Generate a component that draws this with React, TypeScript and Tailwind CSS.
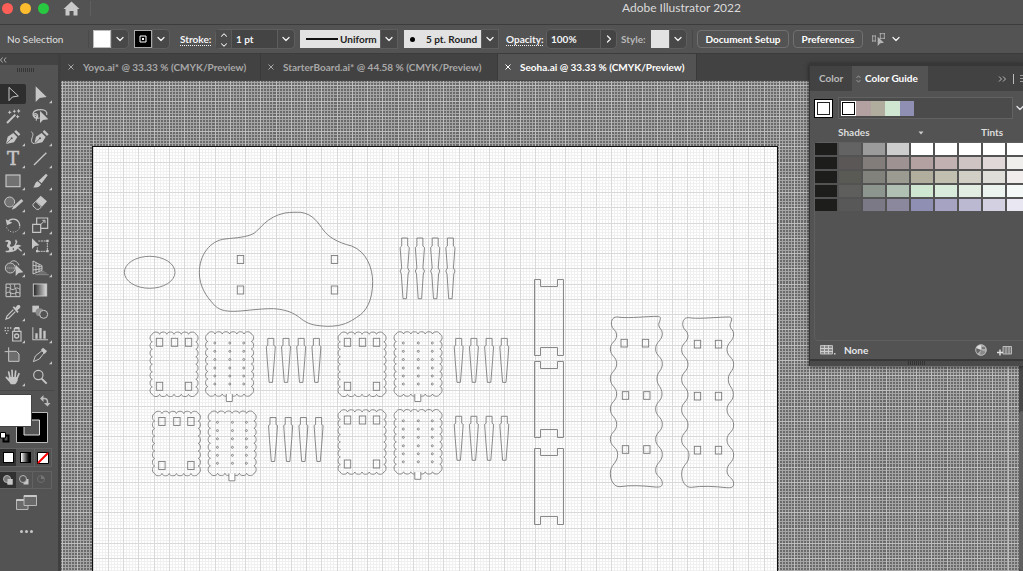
import type { ReactNode } from 'react';
import { ChevronDown, ChevronRight, ChevronUp } from 'lucide-react';

const tabs = [
  { name: 'Yoyo.ai* @ 33.33 % (CMYK/Preview)', width: 'w-[200px]', active: false },
  { name: 'StarterBoard.ai* @ 44.58 % (CMYK/Preview)', width: 'w-[237px]', active: false },
  { name: 'Seoha.ai @ 33.33 % (CMYK/Preview)', width: 'w-[199px]', active: true },
];

const swatchRows = [
  ['bg-[#1d1e1c]', 'bg-[#636363]', 'bg-[#9b9b9b]', 'bg-[#cdcdcd]', 'bg-white', 'bg-white', 'bg-white', 'bg-white', 'bg-white'],
  ['bg-[#1d1e1c]', 'bg-[#5b5757]', 'bg-[#827c7b]', 'bg-[#9e9392]', 'bg-[#b3a0a0]', 'bg-[#c1b2b1]', 'bg-[#cfc4c4]', 'bg-[#dfd7d8]', 'bg-[#f0eded]'],
  ['bg-[#1d1e1c]', 'bg-[#5a5a54]', 'bg-[#81827b]', 'bg-[#9c9b91]', 'bg-[#b1ae9e]', 'bg-[#c1bfb0]', 'bg-[#d1cec5]', 'bg-[#dfded9]', 'bg-[#f1edec]'],
  ['bg-[#1d1e1c]', 'bg-[#5e5f5c]', 'bg-[#8d958f]', 'bg-[#b0c0b3]', 'bg-[#cfe7d1]', 'bg-[#d9ebda]', 'bg-[#e3eee3]', 'bg-[#ebf4ee]', 'bg-[#f5f9f7]'],
  ['bg-[#1d1e1c]', 'bg-[#585858]', 'bg-[#7b7985]', 'bg-[#8b889d]', 'bg-[#8f8eb3]', 'bg-[#a5a2c2]', 'bg-[#bbb9d1]', 'bg-[#d2d0e1]', 'bg-[#e8e7f2]'],
];

const nib = (
  <>
    <path d="M9 51L14 29L31 18L43 30L33 46Z" fill="currentColor" />
    <path d="M34 14L39 9L52 22L47 27Z" fill="currentColor" />
    <path d="M10 50L25 35" stroke="#535353" strokeWidth="2" />
    <circle cx="26" cy="34" r="3" fill="#535353" />
  </>
);

const tools: { name: string; more: boolean; icon: ReactNode }[] = [
  { name: 'Selection', more: false, icon: <path d="M18 10V50L28 39L46 36Z" fill="none" stroke="currentColor" strokeWidth="3" /> },
  { name: 'Direct Selection', more: true, icon: <path d="M17 7V54L29 42L50 39Z" fill="currentColor" /> },
  {
    name: 'Magic Wand', more: false, icon: (
      <>
        <path d="M12 51L37 26" stroke="currentColor" strokeWidth="6" />
        <path d="M20 13l2 4 4 2-4 2-2 4-2-4-4-2 4-2zM34 10l2 4 3 2-3 2-2 3-2-3-3-2 3-2zM47 8l2 5 4 2-4 2-2 5-2-5-4-2 4-2zM44 26l2 4 4 2-4 2-2 4-2-4-4-2 4-2z" fill="currentColor" />
      </>
    ),
  },
  {
    name: 'Lasso', more: false, icon: (
      <>
        <path d="M29 36C14 38 8 32 9 23C11 13 23 11 33 11C46 11 53 17 50 27M10 27C15 18 25 25 23 32C20 40 11 36 13 31C16 23 26 34 18 44" fill="none" stroke="currentColor" strokeWidth="3.5" />
        <path d="M30 15V51L39 42L55 40Z" fill="currentColor" />
      </>
    ),
  },
  { name: 'Pen', more: true, icon: nib },
  {
    name: 'Curvature', more: true, icon: (
      <>
        <g transform="translate(4 0)">{nib}</g>
        <path d="M4 14C12 20 8 27 6 33C3 42 5 50 13 50" fill="none" stroke="currentColor" strokeWidth="3" />
      </>
    ),
  },
  { name: 'Type', more: true, icon: <text x="30" y="48" textAnchor="middle" fontFamily="DejaVu Serif, serif" fontSize="54" fill="currentColor" stroke="currentColor" strokeWidth="1.5">T</text> },
  { name: 'Line Segment', more: true, icon: <path d="M12 48L49 11" stroke="currentColor" strokeWidth="4" /> },
  { name: 'Rectangle', more: true, icon: <rect x="9" y="12" width="42" height="35" fill="#727272" stroke="currentColor" strokeWidth="3.5" /> },
  {
    name: 'Paintbrush', more: true, icon: (
      <>
        <path d="M48 8L53 13L35 37L26 29Z" fill="currentColor" />
        <path d="M23 31L33 40C28 50 20 51 9 49C16 45 13 34 23 31Z" fill="currentColor" />
      </>
    ),
  },
  {
    name: 'Shaper', more: true, icon: (
      <>
        <circle cx="20" cy="27" r="15" fill="#727272" stroke="currentColor" strokeWidth="3" />
        <path d="M57 20L35 42" stroke="#535353" strokeWidth="14" />
        <path d="M55 18L61 24L37 46L26 50L31 40Z" fill="currentColor" />
      </>
    ),
  },
  {
    name: 'Eraser', more: true, icon: (
      <>
        <path d="M32 8L51 25L36 41L17 24Z" fill="currentColor" />
        <path d="M17 25L34 42L27 49H20L9 39V34Z" fill="none" stroke="currentColor" strokeWidth="3" />
      </>
    ),
  },
  {
    name: 'Rotate', more: true, icon: (
      <>
        <path d="M13 23C20 10 39 9 47 21C50 26 51 30 50 34" fill="none" stroke="currentColor" strokeWidth="4" />
        <path d="M50 37C46 51 28 56 17 46C12 42 10 37 10 32" fill="none" stroke="currentColor" strokeWidth="3" strokeDasharray="3 5" />
        <path d="M8 13L12 31L28 23Z" fill="currentColor" />
      </>
    ),
  },
  {
    name: 'Scale', more: true, icon: (
      <>
        <path d="M20 26V9H53V40H32M8 28H32V52H8Z" fill="none" stroke="currentColor" strokeWidth="3.5" />
        <path d="M32 29L44 17M37 16H45V24" fill="none" stroke="currentColor" strokeWidth="3" />
      </>
    ),
  },
  {
    name: 'Width', more: true, icon: (
      <>
        <path d="M6 15C15 8 26 14 24 22C22 28 17 29 24 32C31 33 40 20 56 30C46 30 43 46 28 47C16 48 6 52 8 44C20 46 22 38 13 33C8 27 19 21 14 18C11 16 8 19 6 15Z" fill="currentColor" />
        <path d="M28 46L42 16M46 37L56 46M39 11v8" stroke="currentColor" strokeWidth="4" />
        <circle cx="31" cy="39" r="4" fill="#535353" stroke="currentColor" strokeWidth="3" />
      </>
    ),
  },
  {
    name: 'Free Transform', more: true, icon: (
      <>
        <path d="M6 7V39L15 30L28 28Z" fill="currentColor" />
        <path d="M25 15H52V46H22V34" fill="none" stroke="currentColor" strokeWidth="3" strokeDasharray="6 2" />
        <path d="M49 11h7v7h-7zM49 42h7v7h-7zM18 42h7v7h-7z" fill="currentColor" />
      </>
    ),
  },
  {
    name: 'Shape Builder', more: true, icon: (
      <>
        <circle cx="22" cy="30" r="15" fill="#666" stroke="currentColor" strokeWidth="3" />
        <path d="M22 13C30 4 44 9 48 22" fill="none" stroke="currentColor" strokeWidth="3" />
        <path d="M13 30H38" stroke="currentColor" strokeWidth="3" strokeDasharray="3 3" />
        <path d="M38 20V54L47 45L61 43Z" fill="currentColor" />
      </>
    ),
  },
  {
    name: 'Perspective Grid', more: true, icon: (
      <>
        <path d="M9 9V48M9 9L36 23V37L9 48M18 14V44M27 19V41M9 22L36 27M9 36L36 32" fill="none" stroke="currentColor" strokeWidth="3" />
        <path d="M31 40H43M25 45H50M16 50H56" stroke="#8a8a8a" strokeWidth="3" />
      </>
    ),
  },
  {
    name: 'Mesh', more: false, icon: (
      <path d="M9 12H51V50H9ZM9 24C22 17 23 34 34 27C43 21 45 25 51 28M9 40C20 30 27 47 38 39C44 35 48 38 51 41M20 12C28 23 17 31 22 38C25 44 23 47 21 50M36 12C31 23 43 28 39 36C37 42 38 46 41 50" fill="none" stroke="currentColor" strokeWidth="3" />
    ),
  },
  { name: 'Gradient', more: false, icon: <rect x="10" y="12" width="40" height="36" fill="url(#ramp)" stroke="currentColor" strokeWidth="3" /> },
  {
    name: 'Eyedropper', more: true, icon: (
      <>
        <path d="M31 23L12 42L9 51L18 48L37 29" fill="none" stroke="currentColor" strokeWidth="3.5" />
        <path d="M29 16L33 13L37 17L43 10C51 6 55 14 50 19L43 25L47 29L43 33Z" fill="currentColor" />
      </>
    ),
  },
  {
    name: 'Blend', more: false, icon: (
      <>
        <rect x="7" y="11" width="20" height="20" fill="currentColor" />
        <circle cx="29" cy="31" r="12" fill="#8c8c8c" />
        <circle cx="41" cy="37" r="12" fill="#535353" stroke="currentColor" strokeWidth="3" />
      </>
    ),
  },
  {
    name: 'Symbol Sprayer', more: true, icon: (
      <>
        <path d="M5 10h4v4h-4zM13 10h4v4h-4zM21 10h4v4h-4zM5 18h4v4h-4zM13 18h4v4h-4zM9 26h4v4h-4z" fill="currentColor" />
        <path d="M29 22H54V51H29ZM34 22V14H48V22" fill="none" stroke="currentColor" strokeWidth="3.5" />
        <path d="M35 9H49V15H35Z" fill="currentColor" />
        <circle cx="41" cy="36" r="6" fill="none" stroke="currentColor" strokeWidth="4" />
      </>
    ),
  },
  { name: 'Column Graph', more: true, icon: <path d="M7 10H10V46H54V49H7ZM16 28h7v16h-7zM28 12h7v32h-7zM40 20h7v24h-7z" fill="currentColor" /> },
  {
    name: 'Artboard', more: false, icon: (
      <>
        <path d="M17 7V20H5" fill="none" stroke="currentColor" strokeWidth="3" />
        <path d="M17 19H40L48 27V49H17Z" fill="#6d6d6d" stroke="currentColor" strokeWidth="3" />
      </>
    ),
  },
  {
    name: 'Slice', more: true, icon: (
      <>
        <path d="M10 50L16 33L36 17L42 24L28 42Z" fill="none" stroke="currentColor" strokeWidth="3" />
        <path d="M33 14L39 8L51 18L44 27Z" fill="currentColor" />
      </>
    ),
  },
  {
    name: 'Hand', more: true, icon: (
      <>
        <path d="M17 30H44V40C42 46 38 51 36 52H24C21 50 18 43 17 40Z" fill="currentColor" />
        <path d="M21 33L17 15M28 31L27 10M36 31L38 12M42 34L48 20M19 41L10 31" stroke="currentColor" strokeWidth="5" strokeLinecap="round" />
      </>
    ),
  },
  {
    name: 'Zoom', more: false, icon: (
      <>
        <circle cx="25" cy="24" r="14" fill="none" stroke="currentColor" strokeWidth="3.5" />
        <path d="M35 35L50 50" stroke="currentColor" strokeWidth="6" />
      </>
    ),
  },
];

// ruler grid: heavy line every 15.25px, five light steps in each
function gridPath(start: number, every: number, count: number, vertical: boolean) {
  let d = '';
  for (let i = 0; i < count; i++) {
    const p = Math.round(start + i * every) + 0.5;
    d += vertical ? `M${p} 0V2400` : `M0 ${p}H2800`;
  }
  return d;
}

const minor = gridPath(1, 3.05, 900, true) + gridPath(9, 3.05, 780, false);
const major = gridPath(1, 15.25, 180, true) + gridPath(9, 15.25, 156, false);

// card outline with rounded bumps on all four edges
function scallop(w: number, h: number) {
  const nx = 6;
  const ny = 8;
  const dx = (w - 4) / nx;
  const dy = (h - 4) / ny;
  let d = 'M2 2';
  for (let i = 0; i < nx; i++) d += `c${dx * 0.1} -3 ${dx * 0.9} -3 ${dx} 0`;
  for (let i = 0; i < ny; i++) d += `c3 ${dy * 0.1} 3 ${dy * 0.9} 0 ${dy}`;
  for (let i = 0; i < nx; i++) d += `c${-dx * 0.1} 3 ${-dx * 0.9} 3 ${-dx} 0`;
  for (let i = 0; i < ny; i++) d += `c-3 ${-dy * 0.1} -3 ${-dy * 0.9} 0 ${-dy}`;
  return d;
}

function wave(points: number[][]) {
  let d = '';
  for (let i = 1; i < points.length; i++) {
    const [x0, y0] = points[i - 1];
    const [x1, y1] = points[i];
    const m = (y0 + y1) / 2;
    d += `C${x0} ${m} ${x1} ${m} ${x1} ${y1}`;
  }
  return d;
}

const sideRight = wave([[416, 163], [427, 190], [407, 237], [427, 281], [411, 326], [426, 372], [407, 417], [427, 463], [407, 508], [427, 553], [407, 601], [427, 640]]);
const sideLeft = wave([[271, 610], [293, 553], [271, 508], [290, 463], [271, 417], [290, 372], [271, 326], [290, 281], [271, 237], [290, 195], [274, 162]]);
const wavyPanel = `M274 162C274 142 286 139 300 142C330 145 380 139 415 139C427 141 418 153 416 163${sideRight}C427 650 420 652 405 651C370 647 330 645 300 650C282 651 271 632 271 610${sideLeft}`;

const Hole = ({ x, y }: { x: number; y: number }) => <rect x={x} y={y} width="6.4" height="8" />;

function Seat({ x, y }: { x: number; y: number }) {
  return (
    <g transform={`translate(${x} ${y})`}>
      <path d={scallop(47.5, 64)} />
      <Hole x={6} y={6} />
      <Hole x={21} y={6} />
      <Hole x={35} y={6} />
      <Hole x={6} y={50} />
      <Hole x={35} y={50} />
    </g>
  );
}

function Back({ x, y }: { x: number; y: number }) {
  return (
    <g transform={`translate(${x} ${y})`}>
      <path d={scallop(47.5, 64)} />
      <path d="M20.500 62V69.5H26.500V62" fill="#fff" />
      {[9, 24, 38].map((cx) => [11, 19.3, 27.5, 36, 44, 52].map((cy) => <circle key={`${cx}-${cy}`} cx={cx} cy={cy} r="1" />))}
    </g>
  );
}

function Legs({ x, y }: { x: number; y: number }) {
  return (
    <g transform={`translate(${x} ${y})`}>
      {[0, 15.2, 30.4, 45.6].map((dx) => (
        <path key={dx} transform={`translate(${dx} 0)`} d="M-3 0H3V7L4.5 8L3.5 22L1.7 44H-1.7L-3.5 22L-4.5 8L-3 7Z" />
      ))}
    </g>
  );
}

function Artwork() {
  return (
    <svg className="absolute inset-0 h-full w-full" aria-label="Artboard">
      <g transform="translate(-61 -81)">
        <path d={minor} stroke="#a5a5a5" />
        <path d={major} stroke="#bebebe" />
        <clipPath id="board"><rect x="93" y="147" width="685" height="2000" /></clipPath>
        <rect x="92.5" y="146.5" width="685" height="2000" fill="#fff" />
        <g clipPath="url(#board)">
          <path d={minor} stroke="#f0f0f0" />
          <path d={major} stroke="#d9d9d9" />
        </g>
        <rect x="92.5" y="146.5" width="685" height="2000" fill="none" stroke="#111" />
        <g fill="none" stroke="#7d7d7d" strokeWidth="0.9">
          <ellipse cx="149.7" cy="272.3" rx="25.3" ry="16" />
          <path transform="translate(110 200) scale(.33333)" strokeWidth="2.8" d="M268 218C268 165 300 122 345 117C380 113 410 112 432 100C450 88 470 50 525 39C545 36 560 37 572 37C610 42 625 70 640 90C655 110 680 127 725 138C770 155 788 205 788 245C788 300 770 335 740 352C720 365 700 379 652 379C620 377 600 375 580 361C560 347 545 330 490 326C440 326 400 334 370 334C345 334 325 330 310 312C290 290 268 260 268 218Z" />
          <Hole x={237.3} y={255.5} />
          <Hole x={237.3} y={286} />
          <Hole x={331.3} y={255.5} />
          <Hole x={331.3} y={286} />
          {[404.7, 419.9, 435.2, 450.4].map((x) => (
            <path key={x} transform={`translate(${x} 238)`} d="M-3 0H3V8L4.6 9.5L3 30L4.6 33L3.4 36L1.7 60.7H-1.7L-3.4 36L-4.6 33L-3 30L-4.6 9.5L-3 8Z" />
          ))}
          <Seat x={150.3} y={332.3} />
          <Back x={205.8} y={332} />
          <Legs x={270.8} y={338.4} />
          <Seat x={152.7} y={411.5} />
          <Back x={208.4} y={411.3} />
          <Legs x={273} y={417.5} />
          <Seat x={338.3} y={332.3} />
          <Back x={394.3} y={332} />
          <Legs x={458.7} y={338.4} />
          <Seat x={338.3} y={410} />
          <Back x={394.3} y={409.8} />
          <Legs x={458.7} y={416.3} />
          {[279.5, 361.5, 448.5].map((y) => (
            <path key={y} transform={`translate(534.5 ${y})`} d="M0 0H6V7H23V0H29V76H23V68H6V76H0Z" />
          ))}
          <g transform="translate(520 270) scale(.33333)" strokeWidth="2.8">
            <path d={wavyPanel} />
            <path transform="translate(214 2)" d={wavyPanel} />
            {[[303, 208], [367, 208], [307, 365], [371, 365], [307, 527], [371, 527], [523, 211], [586, 211], [523, 367], [586, 367], [523, 529], [586, 529]].map(([x, y]) => (
              <rect key={`${x}-${y}`} x={x} y={y} width="19" height="23" />
            ))}
          </g>
        </g>
      </g>
    </svg>
  );
}

function DropButton({ label }: { label: string }) {
  return (
    <button aria-label={label} className="flex h-[18px] w-4 items-center justify-center rounded-r-sm bg-[#484848] ring-1 ring-[#5e5e5e]">
      <ChevronDown className="size-3" strokeWidth={2.5} />
    </button>
  );
}

function ControlBar() {
  return (
    <div className="flex h-[29px] shrink-0 items-center border-t border-[#3c3c3c] text-[10px] font-bold text-gray-100">
      <span className="w-[88px] shrink-0 pl-[7px] font-medium text-[#d8d8d8]">No Selection</span>
      <div className="flex w-[92px] shrink-0 items-center border-l border-[#4a4a4a] pl-1">
        <button aria-label="Fill" className="mr-px size-[18px] border border-[#bbb] bg-white" />
        <DropButton label="Fill options" />
        <button aria-label="Stroke color" className="ml-1.5 mr-px flex size-[18px] items-center justify-center border border-[#aaa] bg-black">
          <svg viewBox="0 0 8 8" className="size-2" aria-hidden="true">
            <path d="M1 1H7V7H1Z" fill="none" stroke="#fff" />
            <path d="M3 3H5V5H3Z" fill="#fff" />
          </svg>
        </button>
        <DropButton label="Stroke options" />
      </div>
      <label htmlFor="stroke" className="w-9 shrink-0 underline decoration-dotted underline-offset-2">Stroke:</label>
      <div className="flex h-[18px] w-[78px] shrink-0 items-center rounded-sm bg-[#444] ring-1 ring-[#5e5e5e]">
        <div className="flex h-full w-4 flex-col items-center justify-between border-r border-[#5a5a5a] bg-[#4b4b4b]">
          <button aria-label="Increase stroke"><ChevronUp className="size-2.5" strokeWidth={2.5} /></button>
          <button aria-label="Decrease stroke"><ChevronDown className="size-2.5" strokeWidth={2.5} /></button>
        </div>
        <input id="stroke" defaultValue="1 pt" className="w-[46px] bg-transparent pl-1 outline-none" />
        <DropButton label="Stroke weights" />
      </div>
      <div className="relative ml-1.5 h-[18px] w-[97px] shrink-0">
        <select aria-label="Width profile" className="h-full w-full appearance-none bg-[#e2e2e2] pl-10 text-[#222]">
          <option>Uniform</option>
        </select>
        <svg viewBox="0 0 32 2" className="pointer-events-none absolute left-1.5 top-2 h-0.5 w-8" aria-hidden="true"><path d="M0 1H32" stroke="#111" strokeWidth="2" /></svg>
        <span className="pointer-events-none absolute right-0 top-0 flex h-full w-4 items-center justify-center bg-[#484848] ring-1 ring-[#5e5e5e]"><ChevronDown className="size-3" strokeWidth={2.5} /></span>
      </div>
      <div className="relative ml-[7px] h-[18px] w-[94px] shrink-0">
        <select aria-label="Brush" className="h-full w-full appearance-none bg-[#e2e2e2] pl-[22px] text-[#222]">
          <option>5 pt. Round</option>
        </select>
        <span className="pointer-events-none absolute left-1.5 top-[7px] size-[5px] rounded-full bg-black" />
        <span className="pointer-events-none absolute right-0 top-0 flex h-full w-4 items-center justify-center bg-[#484848] ring-1 ring-[#5e5e5e]"><ChevronDown className="size-3" strokeWidth={2.5} /></span>
      </div>
      <label htmlFor="opacity" className="ml-2 w-[41px] shrink-0 underline decoration-dotted underline-offset-2">Opacity:</label>
      <div className="flex h-[18px] w-[69px] shrink-0 items-center rounded-sm bg-[#444] ring-1 ring-[#5e5e5e]">
        <input id="opacity" defaultValue="100%" className="w-[53px] bg-transparent pl-1 outline-none" />
        <button aria-label="Opacity slider" className="flex h-full w-4 items-center justify-center border-l border-[#5a5a5a]"><ChevronRight className="size-3" strokeWidth={2.5} /></button>
      </div>
      <span className="ml-[5px] w-[30px] shrink-0 text-[#b8b8b8]">Style:</span>
      <button aria-label="Graphic style" className="mr-px size-[18px] shrink-0 bg-[#e2e2e2]" />
      <DropButton label="Graphic styles" />
      <span className="ml-1.5 h-[18px] border-l border-[#484848]" />
      <button className="ml-1 h-[18px] w-[92px] shrink-0 rounded-sm border border-[#707070] text-white">Document Setup</button>
      <button className="ml-1 h-[18px] w-[70px] shrink-0 rounded-sm border border-[#707070] text-white">Preferences</button>
      <button aria-label="Align to" className="ml-2 flex shrink-0 items-center gap-1">
        <svg viewBox="0 0 45 48" className="h-4 w-[15px] text-[#b5b5b5]" aria-hidden="true">
          <path d="M3 15H15M3 30H15M5 13V32M13 13V32M26 8H42M26 22H42M28 6V24M40 6V24" stroke="currentColor" strokeWidth="2.5" />
          <path d="M20 17V45L28 37L39 35Z" fill="currentColor" />
        </svg>
        <ChevronDown className="size-3" strokeWidth={2.5} />
      </button>
    </div>
  );
}

function Toolbar() {
  return (
    <aside className="flex w-[61px] shrink-0 flex-col border-r-3 border-[#3f3f3f] text-[#c6c6c6]">
      <button aria-label="Collapse tools" className="h-[11px] shrink-0 bg-[#434343]">
        <svg viewBox="0 0 7 6" className="h-1.5 w-[7px]" aria-hidden="true"><path d="M2.500 .5L.5 3L2.500 5.500M6 .5L4 3L6 5.500" fill="none" stroke="currentColor" strokeWidth=".8" /></svg>
      </button>
      <div className="flex h-[18px] shrink-0 justify-center pr-1.5 pt-[3px]">
        <svg viewBox="0 0 18 4" className="h-1 w-[18px]" aria-hidden="true"><path d="M0 2H18" stroke="#363636" strokeWidth="4" strokeDasharray="1 1" /></svg>
      </div>
      <div className="grid h-[305px] shrink-0 grid-cols-[26px_28px] grid-rows-[repeat(14,1fr)] items-center">
        {tools.map((tool, i) => (
          <button key={tool.name} aria-label={tool.name} className={i === 0 ? 'flex h-5 items-center justify-center rounded-r-xs bg-[#2e2e2e]' : 'flex h-5 items-center justify-center'}>
            <svg viewBox="0 0 78 60" className="h-5 w-[26px] shrink-0" aria-hidden="true">
              <defs>
                <linearGradient id="ramp"><stop stopColor="#222" /><stop offset="1" stopColor="#ddd" /></linearGradient>
              </defs>
              <g transform="translate(9 0)">
                {tool.icon}
                {tool.more && <path d="M66 49V58H57Z" fill="currentColor" />}
              </g>
            </svg>
          </button>
        ))}
      </div>
      <button aria-label="Fill and stroke" className="mt-0.5 h-[54px] w-[54px] shrink-0 border-t border-[#484848]">
        <svg viewBox="0 0 54 52" className="h-[52px] w-[54px]" aria-hidden="true">
          <path d="M16.500 20.500H47.500V50.500H16.500Z" fill="#000" stroke="#bbb" />
          <path d="M24 28H39.500V43H24Z" fill="#535353" stroke="#ddd" />
          <path d="M-1 2.500H31.500V34.500H-1Z" fill="#fff" stroke="#444" />
          <path d="M41 6.500H44.500Q47.500 6.500 47.500 10V12" fill="none" stroke="#bbb" strokeWidth="1.500" />
          <path d="M40 6.500L43.500 3V10ZM47.500 14.500L44 11H50.500Z" fill="#bbb" />
          <path d="M3.500 43.500H8.500V49.500H3.500Z" fill="none" stroke="#000" strokeWidth="2" />
          <path d="M.5 40.500H5.500V46H.5Z" fill="#fff" stroke="#000" />
        </svg>
      </button>
      <div className="mt-1 flex h-[19px] w-[52px] shrink-0 border-y border-r border-[#626262]">
        <button aria-label="Color" className="flex w-4 items-center justify-center bg-[#303030]"><span className="size-[11px] border border-black bg-white" /></button>
        <button aria-label="Gradient fill" className="flex w-[19px] items-center justify-center border-r border-[#626262]"><span className="size-[11px] border border-black bg-linear-to-r from-white to-black" /></button>
        <button aria-label="No fill" className="flex w-4 items-center justify-center">
          <svg viewBox="0 0 12 12" className="size-3" aria-hidden="true"><path d="M.5 .5H11.500V11.500H.5Z" fill="#fff" stroke="#000" /><path d="M1 11L11 1" stroke="#f00" strokeWidth="2" /></svg>
        </button>
      </div>
      <div className="mt-1 flex h-[18px] w-[52px] shrink-0 border-y border-r border-[#626262]">
        {['Draw Normal', 'Draw Behind', 'Draw Inside'].map((mode, i) => (
          <button key={mode} aria-label={mode} className={i === 0 ? 'flex w-4 items-center justify-center bg-[#303030]' : 'flex w-[18px] items-center justify-center border-r border-[#626262] last:border-0'}>
            <svg viewBox="0 0 12 12" className="size-3" aria-hidden="true">
              {i < 2 && <path d="M5.500 5H10.500V10.500H5.500Z" fill="#c6c6c6" />}
              <circle cx="5" cy="5" r="3.500" fill={i === 0 ? '#777' : '#535353'} stroke={i === 2 ? '#6d6d6d' : '#b5b5b5'} />
              {i === 0 && <path d="M5.500 5H10.500V10.500H5.500Z" fill="#c6c6c6" />}
              {i === 2 && <path d="M5 5V2A3 3 0 0 1 8 5Z" fill="#777" />}
            </svg>
          </button>
        ))}
      </div>
      <button aria-label="Change screen mode" className="ml-4 mt-1.5 w-[21px]">
        <svg viewBox="0 0 21 15" className="h-[15px] w-[21px]" aria-hidden="true">
          <path d="M.5 4.500H12V14.500H.5Z" fill="#6a6a6a" stroke="#b8b8b8" />
          <path d="M.5 5H12" stroke="#c8c8c8" strokeWidth="2" />
          <path d="M8 .5H20.500V10.500H8Z" fill="#6a6a6a" stroke="#b8b8b8" />
          <path d="M8 1H20.500" stroke="#c8c8c8" strokeWidth="2" />
        </svg>
      </button>
      <button aria-label="Edit toolbar" className="ml-5 mt-5 flex gap-[2px]">
        <span className="size-[3px] rounded-full bg-[#c6c6c6]" />
        <span className="size-[3px] rounded-full bg-[#c6c6c6]" />
        <span className="size-[3px] rounded-full bg-[#c6c6c6]" />
      </button>
    </aside>
  );
}

function ColorGuide() {
  return (
    <section className="absolute right-0 top-[9px] flex h-[303px] w-[214px] flex-col overflow-hidden border-l border-t-3 border-[#373737] bg-[#535353] text-[10px] font-bold text-gray-200 shadow-[0_1px_4px_#0008]">
      <div className="flex h-[25px] shrink-0 items-center bg-[#424242]">
        <button className="w-[42px] shrink-0 text-[#bbb]">Color</button>
        <button className="flex h-full w-[76px] shrink-0 items-center gap-1 bg-[#535353] pl-1 text-white">
          <svg viewBox="0 0 5 8" className="h-2 w-[5px] shrink-0" aria-hidden="true"><path d="M.5 3L2.500 .8L4.500 3M.5 5L2.500 7.200L4.500 5" fill="none" stroke="#aaa" strokeWidth=".8" /></svg>
          <span className="whitespace-nowrap">Color Guide</span>
        </button>
        <button aria-label="Collapse panel" className="ml-[70px] shrink-0">
          <svg viewBox="0 0 9 6" className="h-1.5 w-[9px]" aria-hidden="true"><path d="M1 .5L3.500 3L1 5.500M5 .5L7.500 3L5 5.500" fill="none" stroke="#bbb" /></svg>
        </button>
        <span className="ml-1.5 h-2.5 shrink-0 border-l border-[#bbb]" />
        <button aria-label="Panel menu" className="ml-1.5 flex w-2 shrink-0 flex-col gap-[2px]">
          <span className="h-px bg-[#999]" />
          <span className="h-px bg-[#999]" />
          <span className="h-px bg-[#999]" />
        </button>
      </div>
      <div className="flex h-[34px] shrink-0 items-center pl-1">
        <button aria-label="Base color" className="size-[19px] shrink-0 border border-black bg-white p-0.5"><span className="block size-full border border-[#222] bg-white" /></button>
        <div className="ml-[5px] flex h-[22px] w-[175px] shrink-0 items-center border border-[#626262] bg-[#4b4b4b] pl-0.5">
          <span className="size-[15px] border border-white bg-black p-px"><span className="block size-full bg-white" /></span>
          <span className="h-[15px] w-[15px] bg-[#b3a0a0]" />
          <span className="h-[15px] w-[14px] bg-[#b0ad9e]" />
          <span className="h-[15px] w-[15px] bg-[#cfe7d1]" />
          <span className="h-[15px] w-[14px] bg-[#8f8eb3]" />
        </div>
        <button aria-label="Harmony rules" className="ml-px shrink-0"><ChevronDown className="size-3 shrink-0" strokeWidth={2.5} /></button>
      </div>
      <div className="flex h-[15px] shrink-0 items-center pl-7 text-[#ddd]">
        <span className="w-20">Shades</span>
        <svg viewBox="0 0 6 4" className="h-1 w-1.5" aria-hidden="true"><path d="M.5 .5H5.500L3 3.500Z" fill="#ccc" /></svg>
        <span className="ml-[57px]">Tints</span>
      </div>
      <div className="ml-1 mt-0.5 w-[230px] flex-1 rounded-l-sm border border-[#5f5f5f]">
        <div className="flex flex-col gap-0.5">
          {swatchRows.map((row, r) => (
            <div key={r} className="flex gap-0.5">
              {row.map((color, c) => (
                <button key={c} aria-label={`Row ${r + 1}, color ${c + 1}`} className={`${color} h-3 w-[22px] shrink-0`} />
              ))}
            </div>
          ))}
        </div>
      </div>
      <div className="flex h-[18px] shrink-0 items-center pl-2.5">
        <button className="flex w-[155px] items-center gap-2">
          <svg viewBox="0 0 16 10" className="h-2.5 w-4" aria-hidden="true">
            <path d="M.5 .5H12.500V9H.5Z" fill="#888" stroke="#bbb" />
            <path d="M4.500 0V9M8.500 0V9M0 3.500H13M0 6.500H13" stroke="#ccc" />
            <path d="M14 8h1.500v1.500h-1.500z" fill="#ccc" />
          </svg>
          None
        </button>
        <button aria-label="Edit colors">
          <svg viewBox="0 0 12 12" className="size-3" aria-hidden="true">
            <circle cx="6" cy="6" r="5.500" fill="#aaa" />
            <path d="M6 6L1 4A5 5 0 0 1 6 1Z" fill="#ddd" />
            <path d="M6 6L2 10A5 5 0 0 1 1 4Z" fill="#666" />
            <path d="M6 6L11 8A5 5 0 0 1 5 11Z" fill="#888" />
            <path d="M7 3h3v2h-3z" fill="#777" />
            <circle cx="6" cy="6" r="5.300" fill="none" stroke="#c4c4c4" strokeWidth=".8" />
          </svg>
        </button>
        <button aria-label="Save to swatches" className="ml-2.5">
          <svg viewBox="0 0 15 11" className="h-[11px] w-[15px]" aria-hidden="true">
            <path d="M6 1.500H14.500V9H6ZM9 1V9M12 1V9" fill="#777" stroke="#bbb" />
            <path d="M0 7.500H6M3 4.500V10.500" stroke="#ddd" strokeWidth="1.500" />
          </svg>
        </button>
      </div>
      <div className="flex h-[7px] shrink-0 justify-center border-t-2 border-[#373737] bg-[#4a4a4a]">
        <svg viewBox="0 0 18 4" className="h-1 w-[18px]" aria-hidden="true"><path d="M0 2H18" stroke="#333" strokeWidth="4" strokeDasharray="1 1" /></svg>
      </div>
    </section>
  );
}

export default function App() {
  return (
    <div className="flex h-screen flex-col overflow-hidden bg-[#535353] font-['Lato',sans-serif]">
      <header className="grid h-6 shrink-0 grid-cols-[1fr_auto_282px]">
        <div className="flex h-[17px] items-center gap-[7px] pl-0.5">
          <button aria-label="Close" className="size-[11px] rounded-full bg-[#ff5f57]" />
          <button aria-label="Minimize" className="size-[11px] rounded-full bg-[#febc2e]" />
          <button aria-label="Full screen" className="size-[11px] rounded-full bg-[#28c840]" />
          <button aria-label="Home" className="ml-[7px] border-r border-[#5f5f5f] pr-2.5 text-[#c9c9c9]">
            <svg viewBox="0 0 17 15" className="h-[15px] w-[17px]" aria-hidden="true"><path d="M8.500 .5L16.500 8H14.500V14.500H10.500V10H6.500V14.500H2.500V8H.5Z" fill="currentColor" /></svg>
          </button>
        </div>
        <h1 className="text-[12px] leading-4 text-[#dadada]">Adobe Illustrator 2022</h1>
      </header>
      <ControlBar />
      <div className="flex min-h-0 flex-1 border-t border-[#3c3c3c]">
        <Toolbar />
        <main className="relative flex min-w-0 flex-1 flex-col">
          <nav className="flex h-[27px] shrink-0 border-b border-[#474747] bg-[#424242] text-[10px] font-bold">
            {tabs.map((tab) => (
              <div key={tab.name} className={`${tab.width} flex shrink-0 items-center gap-2 whitespace-nowrap border-r border-[#393939] pl-1.5 ${tab.active ? 'bg-[#535353] text-white' : 'text-[#a8a8a8]'}`}>
                <button aria-label="Close document" className="p-px">
                  <svg viewBox="0 0 6 6" className="size-1.5" aria-hidden="true"><path d="M.5 .5L5.500 5.500M5.500 .5L.5 5.500" stroke="currentColor" /></svg>
                </button>
                <a href="#">{tab.name}</a>
              </div>
            ))}
          </nav>
          <div className="relative min-h-0 flex-1 bg-[#6a6a6a]">
            <Artwork />
            <div className="absolute inset-y-0 right-0 w-1 bg-[#484848] pt-[330px]"><div className="h-full rounded-l-full bg-[#606060]" /></div>
          </div>
          <ColorGuide />
        </main>
      </div>
    </div>
  );
}
